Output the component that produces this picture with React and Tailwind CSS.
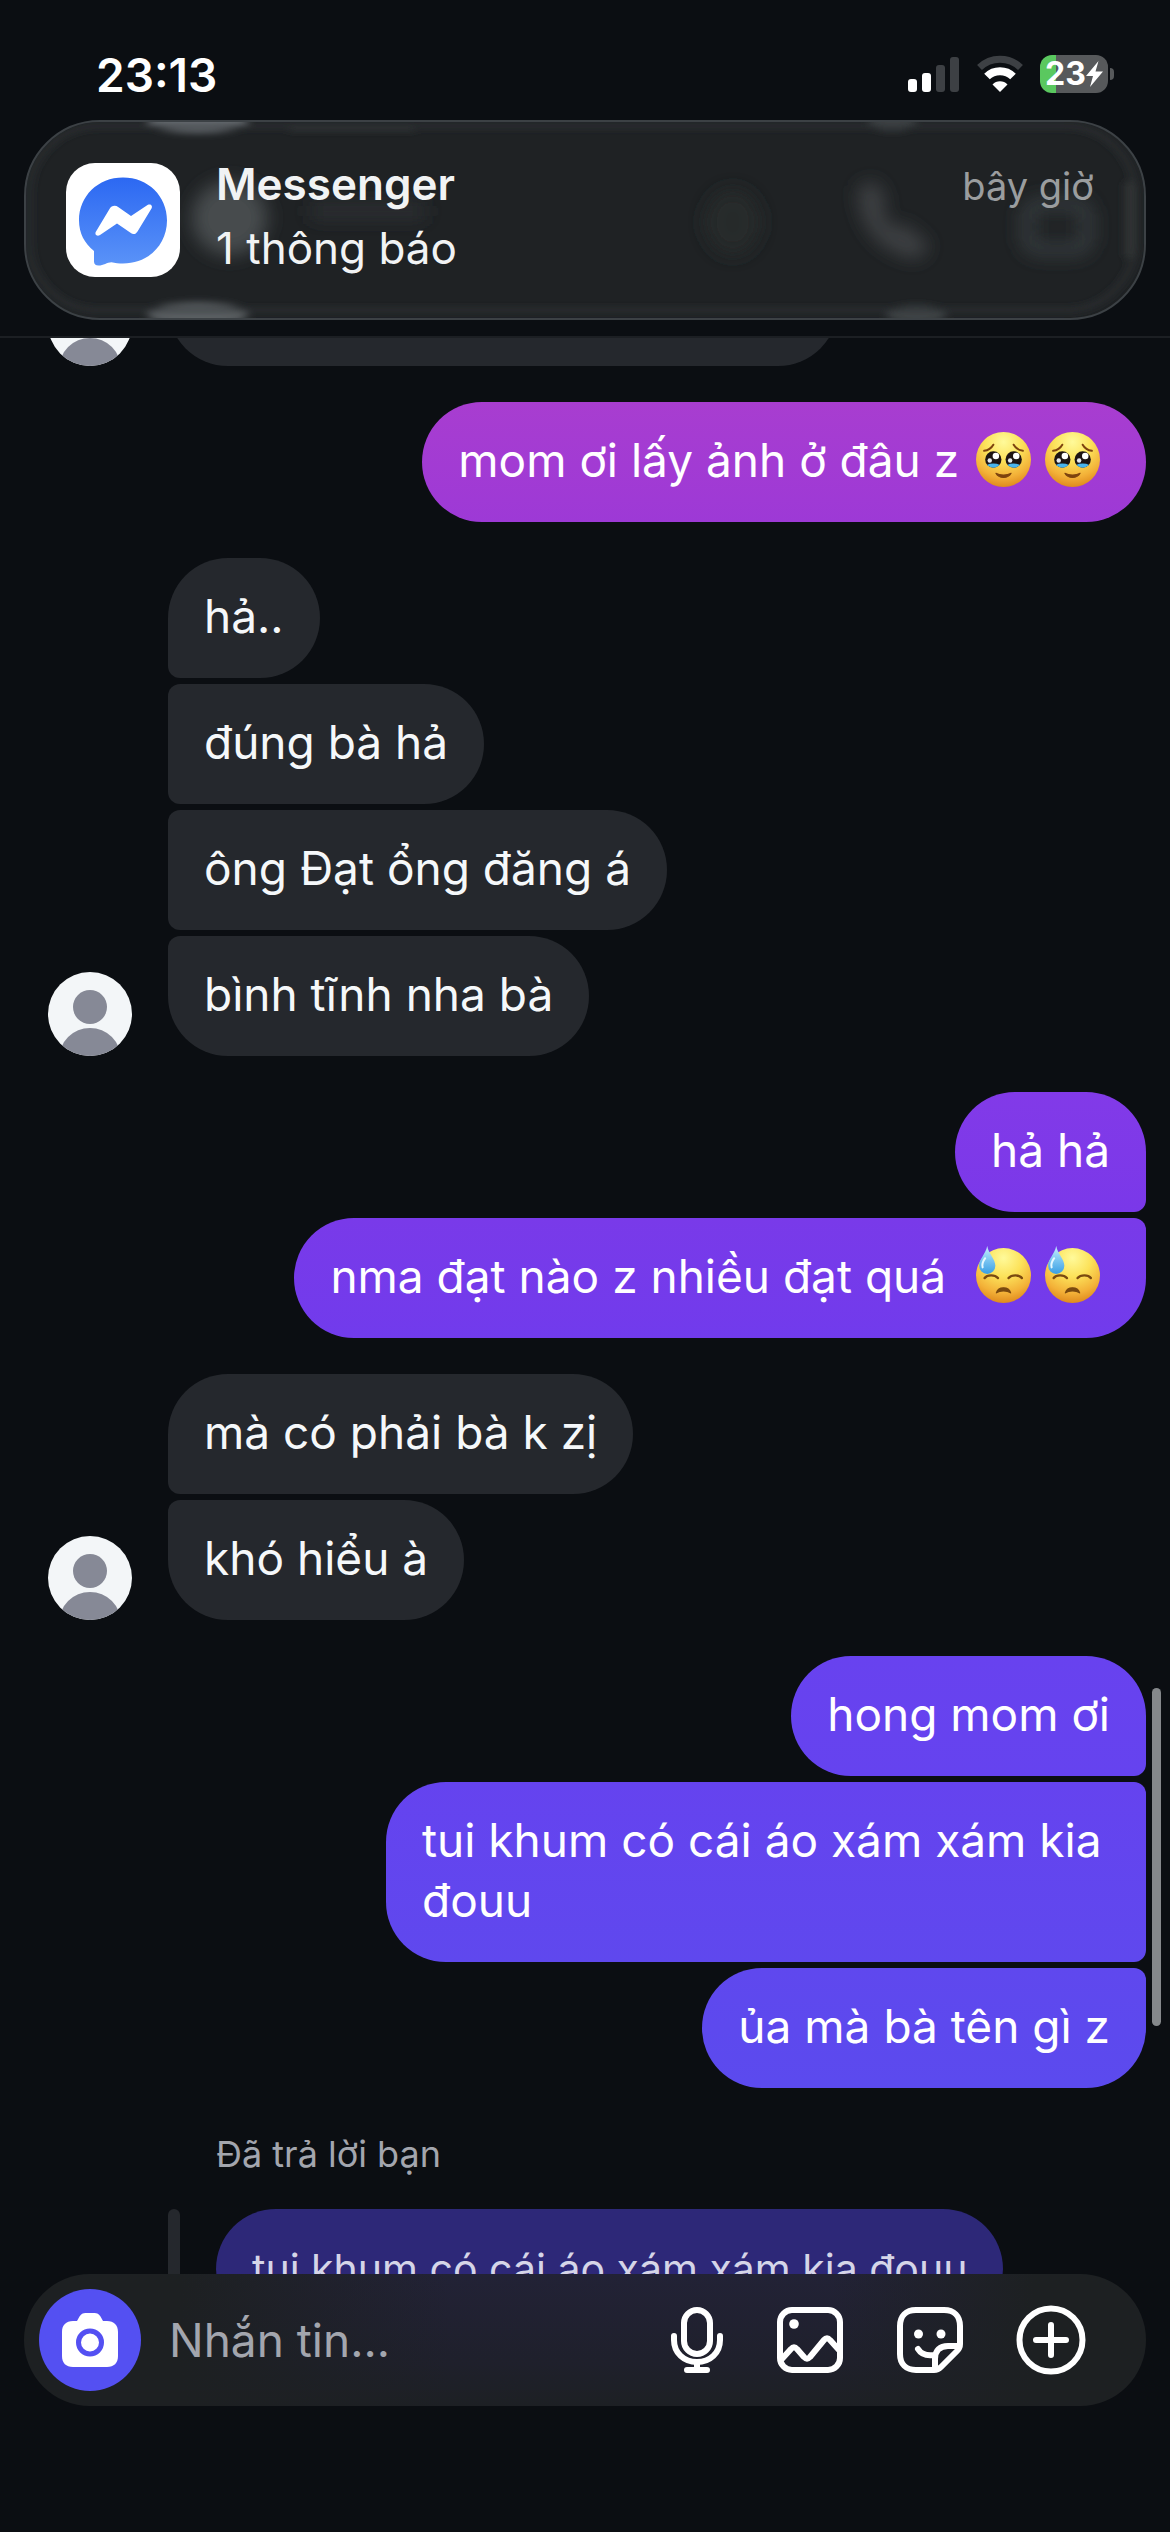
// src/pages/Chat.jsx
import { useState } from 'react';

const conversation = [
  {
    id: 1,
    from: 'me',
    texts: [{ text: 'mom ơi lấy ảnh ở đâu z ', emoji: 'tears', color: 'from-[#a83dd0] to-[#9d39d6]' }],
  },
  {
    id: 2,
    from: 'them',
    texts: [{ text: 'hả..' }, { text: 'đúng bà hả' }, { text: 'ông Đạt ổng đăng á' }, { text: 'bình tĩnh nha bà' }],
  },
  {
    id: 3,
    from: 'me',
    texts: [
      { text: 'hả hả', color: 'from-[#823ae8] to-[#7a38e9]' },
      { text: 'nma đạt nào z nhiều đạt quá  ', emoji: 'sweat', color: 'from-[#793ae9] to-[#713bec]' },
    ],
  },
  { id: 4, from: 'them', texts: [{ text: 'mà có phải bà k zị' }, { text: 'khó hiểu à' }] },
  {
    id: 5,
    from: 'me',
    texts: [
      { text: 'hong mom ơi', color: 'from-[#6842ef] to-[#6543ef]' },
      { text: 'tui khum có cái áo xám xám kia đouu', color: 'from-[#6543ef] to-[#5f48ee]' },
      { text: 'ủa mà bà tên gì z', color: 'from-[#5f48ee] to-[#5b4aee]' },
    ],
  },
];

const EmojiDefs = () => (
  <svg className="absolute h-0 w-0" aria-hidden="true">
    <defs>
      <radialGradient id="face" cx="50%" cy="18%" r="85%">
        <stop offset="0" stopColor="#fffa9a" />
        <stop offset="0.4" stopColor="#fce25a" />
        <stop offset="0.75" stopColor="#f3b138" />
        <stop offset="1" stopColor="#dc8419" />
      </radialGradient>
      <linearGradient id="drop" x1="0" y1="0" x2="0" y2="1">
        <stop offset="0" stopColor="#c9efff" />
        <stop offset="0.5" stopColor="#7cc6f2" />
        <stop offset="1" stopColor="#3a9fe4" />
      </linearGradient>
      <clipPath id="eyeLeft"><circle cx="17" cy="27" r="8" /></clipPath>
      <clipPath id="eyeRight"><circle cx="37" cy="27" r="8" /></clipPath>
    </defs>
  </svg>
);

const TearsEmoji = () => (
  <svg viewBox="0 0 54 54" role="img" aria-label="🥹" className="ml-1 mr-[10px] inline-block h-[55px] w-[55px] align-[-10px]">
    <circle cx="27" cy="27" r="27" fill="url(#face)" />
    <path d="M8 18.500c4-.5 7-2.500 9-6M46 18.500c-4-.5-7-2.500-9-6" fill="none" stroke="#7d430f" strokeWidth="2" strokeLinecap="round" />
    <circle cx="17" cy="27" r="8" fill="#1d1413" />
    <circle cx="37" cy="27" r="8" fill="#1d1413" />
    <g clipPath="url(#eyeLeft)"><ellipse cx="17" cy="35.500" rx="9" ry="4.500" fill="#49b5ee" /></g>
    <g clipPath="url(#eyeRight)"><ellipse cx="37" cy="35.500" rx="9" ry="4.500" fill="#49b5ee" /></g>
    <circle cx="19.500" cy="23.500" r="3.200" fill="#fff" />
    <circle cx="39.500" cy="23.500" r="3.200" fill="#fff" />
    <circle cx="13.500" cy="28" r="2.200" fill="#e6e9ee" />
    <circle cx="33.500" cy="28" r="2.200" fill="#e6e9ee" />
    <path d="M19.500 40.500c3 5.500 12 5.500 15 0-4 2.400-11 2.400-15 0z" fill="#7d430f" stroke="#7d430f" strokeWidth="1" strokeLinejoin="round" />
  </svg>
);

const SweatEmoji = () => (
  <svg viewBox="0 0 54 56" role="img" aria-label="😓" className="ml-1 mr-[10px] inline-block h-[57px] w-[55px] align-[-10px]">
    <circle cx="27" cy="29" r="27" fill="url(#face)" />
    <path d="M8.500 31.500c2.500-3.500 10-3.500 13 0M32 31.500c3-3.500 10.500-3.500 13 0" fill="none" stroke="#7a4a10" strokeWidth="2.400" strokeLinecap="round" />
    <path d="M20 46c2-6.500 12-6.500 14 0-3.500-2.500-10.500-2.500-14 0z" fill="#7a4a10" stroke="#7a4a10" strokeWidth="1.200" strokeLinejoin="round" />
    <path d="M11 0c1.500 8 8 13 8 19.500a8 8 0 0 1-16 0C3 13 9.500 8 11 0z" fill="url(#drop)" />
    <path d="M9 12c-2.500 3.500-3.500 6-2.500 9" fill="none" stroke="#e6f8ff" strokeWidth="2" strokeLinecap="round" />
  </svg>
);

const Avatar = () => (
  <svg viewBox="0 0 84 84" role="img" aria-label="Avatar" className="h-[84px] w-[84px] shrink-0 rounded-full bg-[#f3f6f8]">
    <circle cx="42" cy="35" r="17" fill="#868996" />
    <circle cx="42" cy="87" r="31" fill="#868996" />
  </svg>
);

const StatusBar = () => (
  <div className="flex h-[120px] items-start justify-between pl-24 pr-14 pt-[48px]">
    <time className="text-[46px] leading-[54px] font-semibold text-white">23:13</time>
    <div className="flex items-center gap-4 pt-[6px]">
      <svg viewBox="0 0 52 40" className="h-10 w-[52px]" aria-label="Sóng">
        <rect x="0" y="25" width="9" height="13" rx="3" fill="#fff" />
        <rect x="14" y="19" width="9" height="19" rx="3" fill="#fff" />
        <rect x="28" y="11" width="9" height="27" rx="3" fill="#3d4044" />
        <rect x="42" y="3" width="9" height="35" rx="3" fill="#3d4044" />
      </svg>
      <svg viewBox="0 0 48 40" className="h-10 w-12" aria-label="Wi-Fi">
        <path d="M3.500 13.500a29.500 29.500 0 0 1 41 0" fill="none" stroke="#3d4044" strokeWidth="7" />
        <path d="M11 22.500a18.500 18.500 0 0 1 26 0" fill="none" stroke="#fff" strokeWidth="8" />
        <path d="M24 38l-7.500-7.500a10.500 10.500 0 0 1 15 0z" fill="#fff" />
      </svg>
      <div className="flex items-center gap-[2px]">
        <div className="flex h-[38px] w-[68px] items-center justify-center rounded-[12px] bg-linear-to-r from-[#5ac85f] from-23% to-[#57595b] to-23%">
          <span className="text-[32px] leading-[38px] font-bold text-white">23</span>
          <svg viewBox="0 0 17 26" className="h-[26px] w-[17px]" aria-hidden="true">
            <path d="M12.500 0L0 15h7L4 26l13-15.500h-7.500z" fill="#fff" />
          </svg>
        </div>
        <div className="h-3 w-1 rounded-r-full bg-[#57595b]" />
      </div>
    </div>
  </div>
);

const NotificationBanner = () => (
  <section className="relative mx-6 flex h-[200px] items-center overflow-hidden rounded-[76px] border-2 border-[#3c4145] bg-[#1f2224] pl-10 pr-[50px]">
    {/* Header content seen through the glass */}
    <svg viewBox="0 0 1120 200" preserveAspectRatio="none" className="absolute inset-0 h-full w-full" aria-hidden="true">
      <defs>
        <filter id="soft" x="-50%" y="-50%" width="200%" height="200%"><feGaussianBlur stdDeviation="9" /></filter>
        <filter id="edge" x="-50%" y="-200%" width="200%" height="500%"><feGaussianBlur stdDeviation="4" /></filter>
      </defs>
      <g filter="url(#soft)">
        <circle cx="204" cy="98" r="38" fill="#474b4d" />
        <rect x="285" y="84" width="115" height="14" fill="#2f3335" />
        <ellipse cx="708" cy="102" rx="28" ry="34" fill="#25292a" />
        <path d="M834 66c-4 38 22 70 60 74l12-14-26-22-12 4-10-16 4-14-12-18z" fill="#3d4143" />
        <rect x="1003" y="84" width="60" height="46" rx="12" fill="none" stroke="#353a3c" strokeWidth="14" />
      </g>
      <g filter="url(#edge)">
        <ellipse cx="172" cy="0" rx="50" ry="11" fill="#6b7075" />
        <ellipse cx="172" cy="196" rx="50" ry="12" fill="#5b6064" />
        <rect x="264" y="3" width="125" height="6" fill="#303436" />
        <ellipse cx="868" cy="1" rx="24" ry="8" fill="#414547" />
        <ellipse cx="892" cy="196" rx="30" ry="9" fill="#414547" />
        <rect x="3" y="4" width="1108" height="188" rx="70" fill="none" stroke="#2f3335" strokeWidth="4" />
        <rect x="1101" y="60" width="10" height="80" rx="5" fill="#303436" />
      </g>
    </svg>
    <svg viewBox="0 0 114 114" className="relative h-[114px] w-[114px] shrink-0" role="img" aria-label="Messenger">
      <defs>
        <linearGradient id="bubble" x1="0" y1="0" x2="0" y2="1">
          <stop offset="0" stopColor="#2c68f2" />
          <stop offset="1" stopColor="#5a93f8" />
        </linearGradient>
      </defs>
      <rect width="114" height="114" rx="29" fill="#fff" />
      <path d="M57 14.500c25 0 44 18.500 44 43s-19 43-44 43c-4 0-8-.4-11.500-1.300-4.500 0-8 3.300-13 3.300-3 0-4.500-1.500-4.500-4V88C18.500 80.500 13 70 13 57.500c0-24.500 19-43 44-43z" fill="url(#bubble)" />
      <path d="M30 68.500l13.500-22.500c2-3.500 5.800-4.200 9-1.700L65 53l16.500-11c3-1.500 5.500.5 4 3.500L71.500 68.500c-1.800 3-4.500 3.300-7 1.200L51 60.500 34 72c-3 1.800-5.800-.5-4-3.500z" fill="#fff" />
    </svg>
    <div className="relative ml-9 flex-1 pb-2">
      <h2 className="text-[44px] leading-[64px] font-semibold text-[#f1f3f4]">Messenger</h2>
      <p className="text-[44px] leading-[64px] text-[#f1f3f4]">1 thông báo</p>
    </div>
    <span className="relative self-start pt-[34px] text-[38px] leading-[60px] text-[#9a9d9f]">bây giờ</span>
  </section>
);

const bubbleShape = (mine, index, count) => {
  const first = index === 0;
  const last = index === count - 1;
  if (mine) return `${first ? '' : 'rounded-tr-[12px]'} ${last ? '' : 'rounded-br-[12px]'}`;
  return `${first ? '' : 'rounded-tl-[12px]'} ${last ? '' : 'rounded-bl-[12px]'}`;
};

const MessageGroup = ({ group }) => {
  const mine = group.from === 'me';
  return (
    <li className={`flex shrink-0 items-end ${mine ? 'justify-end' : 'gap-9'}`}>
      {!mine && <Avatar />}
      <div className={`flex flex-col gap-[6px] ${mine ? 'items-end' : 'items-start'}`}>
        {group.texts.map((message, i) => (
          <p
            key={message.text}
            className={`${message.emoji ? 'max-w-[880px]' : 'max-w-[760px]'} rounded-[60px] px-9 pt-7 pb-8 whitespace-pre-wrap ${bubbleShape(mine, i, group.texts.length)} ${mine ? `bg-linear-to-b text-white ${message.color}` : 'bg-[#25282d] text-[#f5f8fa]'}`}
          >
            {message.text}
            {message.emoji === 'tears' && <><TearsEmoji /><TearsEmoji /></>}
            {message.emoji === 'sweat' && <><SweatEmoji /><SweatEmoji /></>}
          </p>
        ))}
      </div>
    </li>
  );
};

const Composer = () => {
  const [draft, setDraft] = useState('');

  return (
    <form
      onSubmit={(e) => { e.preventDefault(); setDraft(''); }}
      className="absolute inset-x-6 bottom-[126px] flex h-[132px] items-center rounded-full bg-[linear-gradient(to_right,#1d2022_14%,#1d202200_38%,#1d202200_72%,#1d2022_90%),linear-gradient(to_bottom,#222236,#1f202c_65%,#1d2024)] pl-[15px] pr-[60px]"
    >
      <button type="button" aria-label="Máy ảnh" className="flex h-[102px] w-[102px] shrink-0 items-center justify-center rounded-full bg-[#5450f2]">
        <svg viewBox="0 0 56 54" className="h-[54px] w-14">
          <path d="M11 8h4l2.500-4.500C19 1 21 0 23.500 0h9C35 0 37 1 38.500 3.500L41 8h4c7 0 11 4 11 11v24c0 7-4 11-11 11H11C4 54 0 50 0 43V19C0 12 4 8 11 8z" fill="#fff" />
          <circle cx="28" cy="29.500" r="11.500" fill="none" stroke="#5450f2" strokeWidth="5" />
        </svg>
      </button>
      <input
        type="text"
        aria-label="Nhắn tin"
        placeholder="Nhắn tin..."
        value={draft}
        onChange={(e) => setDraft(e.target.value)}
        className="ml-7 h-full min-w-0 flex-1 bg-transparent text-white outline-none placeholder:text-[#a3a6ae]"
      />
      <div className="flex shrink-0 items-center gap-[52px] text-white">
        <button type="button" aria-label="Ghi âm">
          <svg viewBox="0 0 54 68" className="h-[68px] w-[54px]" fill="none" stroke="currentColor" strokeWidth="6" strokeLinecap="round">
            <rect x="14" y="4" width="26" height="44" rx="13" />
            <path d="M4 30v4c0 13 10 22 23 22s23-9 23-22v-4M27 56v8M17 64h20" />
          </svg>
        </button>
        <button type="button" aria-label="Ảnh">
          <svg viewBox="0 0 68 68" className="h-[68px] w-[68px]" fill="none" stroke="currentColor" strokeWidth="6" strokeLinecap="round" strokeLinejoin="round">
            <rect x="4" y="4" width="60" height="60" rx="12" />
            <path d="M5 54l10-11c2-2.500 4-2.500 6 0l7 8c2 2 4 2 6 0l14-17c2-2.500 4-2.500 6 0l9 10" />
            <circle cx="18" cy="18" r="4.800" fill="currentColor" stroke="none" />
          </svg>
        </button>
        <button type="button" aria-label="Nhãn dán">
          <svg viewBox="0 0 68 68" className="h-[68px] w-[68px]" fill="none" stroke="currentColor" strokeWidth="6" strokeLinecap="round" strokeLinejoin="round">
            <path d="M38 64H20C10 64 4 58 4 48V20C4 10 10 4 20 4h28c10 0 16 6 16 16v18c0 3-1 5-3 7L45 61c-2 2-4 3-7 3z" />
            <path d="M39 63V53c0-9 5-13 13-13h11M22 43c3 5 9 7 16 6" />
            <circle cx="22.500" cy="28" r="4.500" fill="currentColor" stroke="none" />
            <circle cx="45" cy="28" r="4.500" fill="currentColor" stroke="none" />
          </svg>
        </button>
        <button type="button" aria-label="Thêm">
          <svg viewBox="0 0 70 70" className="h-[70px] w-[70px]" fill="none" stroke="currentColor" strokeWidth="6" strokeLinecap="round">
            <circle cx="35" cy="35" r="31.500" />
            <path d="M35 20v30M20 35h30" />
          </svg>
        </button>
      </div>
    </form>
  );
};

const App = () => {
  return (
    <div className="relative flex h-screen flex-col overflow-hidden bg-[#0b0e12] font-['Inter','Noto_Sans',sans-serif] text-[46px] leading-[60px]">
      <EmojiDefs />
      <header className="shrink-0 border-b-2 border-[#1c1f23] pb-4">
        <StatusBar />
        <NotificationBanner />
      </header>

      <main className="flex min-h-0 flex-1 flex-col justify-end overflow-hidden pb-[203px]">
        <ul className="flex flex-col gap-9 pl-12 pr-6">
          {/* Older message, scrolled under the header */}
          <li className="flex items-end gap-9">
            <Avatar />
            <div className="h-[120px] w-[670px] rounded-[60px] bg-[#25282d]" />
          </li>
          {conversation.map(group => <MessageGroup key={group.id} group={group} />)}
        </ul>

        {/* Quoted reply */}
        <div className="flex shrink-0 flex-col items-start pl-[168px] pt-9">
          <span className="pb-[25px] pl-12 text-[36px] leading-[60px] text-[#a3a6ae]">Đã trả lời bạn</span>
          <blockquote className="flex gap-9">
            <span className="w-3 rounded-t-full bg-[#25282d]" />
            <p className="rounded-[60px] bg-[#2d2878] px-9 py-[30px] text-[41px] text-[#d5d5e8]">tui khum có cái áo xám xám kia đouu</p>
          </blockquote>
        </div>
      </main>

      {/* Scroll indicator */}
      <div className="absolute top-2/3 right-[9px] h-[338px] w-[9px] rounded-full bg-[#85888b]" />
      <Composer />
    </div>
  );
};

export default App;
